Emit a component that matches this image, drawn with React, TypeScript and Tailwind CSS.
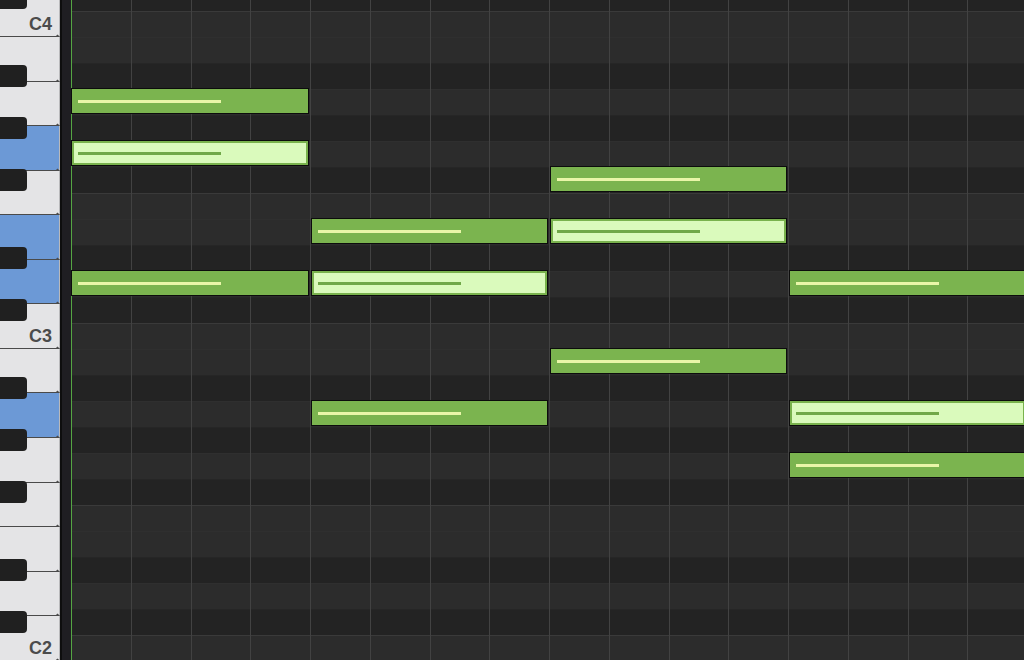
import clsx from "clsx";

// rows from C#4 (partly hidden at top) down to C2
const ROWS = Array.from({ length: 26 }, (_, k) => {
  const semis = 1 - k; // offset from C4
  const n = ((semis % 12) + 12) % 12;
  return { key: k, black: [1, 3, 6, 8, 10].includes(n), edge: n === 0 || n === 5 };
});

const WHITE_KEYS = [
  { name: "D4" },
  { name: "C4", label: true },
  { name: "B3" },
  { name: "A3" },
  { name: "G3", held: true },
  { name: "F3" },
  { name: "E3", held: true },
  { name: "D3", held: true },
  { name: "C3", label: true },
  { name: "B2" },
  { name: "A2", held: true },
  { name: "G2" },
  { name: "F2" },
  { name: "E2" },
  { name: "D2" },
  { name: "C2", label: true },
];

type NoteData = { pos: string; selected?: boolean };

const NOTES: NoteData[] = [
  { pos: "row-start-5 col-start-1" },
  { pos: "row-start-7 col-start-1", selected: true },
  { pos: "row-start-8 col-start-9 ml-[1px]" },
  { pos: "row-start-10 col-start-5 ml-[1px]" },
  { pos: "row-start-10 col-start-9 ml-[1px]", selected: true },
  { pos: "row-start-12 col-start-1" },
  { pos: "row-start-12 col-start-5 ml-[1px]", selected: true },
  { pos: "row-start-12 col-start-13 ml-[1px]" },
  { pos: "row-start-15 col-start-9 ml-[1px]" },
  { pos: "row-start-17 col-start-5 ml-[1px]" },
  { pos: "row-start-17 col-start-13 ml-[1px]", selected: true },
  { pos: "row-start-19 col-start-13 ml-[1px]" },
];

function Keyboard() {
  return (
    <div className="relative w-[60px] shrink-0 overflow-hidden bg-[#e4e4e6]">
      <div className="flex flex-col -mt-[52.143px]">
        {WHITE_KEYS.map((k) => (
          <div
            key={k.name}
            className={clsx(
              "relative flex h-[44.571px] shrink-0 items-end justify-end border-b border-[#4a4a4a] pr-[7px] pb-[3px] border-r border-r-[#b9b9bb]",
              k.held ? "bg-[#6c99d6]" : "bg-[#e4e4e6]"
            )}
          >
            {k.label && (
              <span className="text-[18px] font-bold leading-none text-[#4b4b4b]">{k.name}</span>
            )}
            <span className="absolute right-[0px] bottom-[-2px] h-[3px] w-[3px] rotate-45 bg-[#4a4a4a]" />
          </div>
        ))}
      </div>
      <div className="absolute inset-0 flex flex-col -mt-[15px]">
        {ROWS.map((r) => (
          <div key={r.key} className="h-[26px] shrink-0">
            {r.black && <div className="mt-[2px] h-[22px] w-[27px] rounded-r-[4px] bg-[#202020]" />}
          </div>
        ))}
      </div>
    </div>
  );
}

function Note({ pos, selected }: NoteData) {
  return (
    <div
      className={clsx(
        "col-span-4 flex items-center border border-[#0c0c0c] pl-[6px] mr-[1px]",
        pos,
        selected ? "bg-[#dafabc] shadow-[inset_0_0_0_2px_#79b24d]" : "bg-[#7bb44f]"
      )}
    >
      <div className={clsx("h-[3px] w-[143px]", selected ? "bg-[#70a848]" : "bg-[#e9f6a8]")} />
    </div>
  );
}

export default function App() {
  return (
    <div className="flex h-[660px] w-[1024px] overflow-hidden bg-[#262626] font-['Liberation_Sans',sans-serif]">
      <Keyboard />
      <div className="w-[11px] shrink-0 border-l-2 border-[#0e0e0e] bg-[#1f1e22]" />
      <div className="relative flex-1 overflow-hidden">
        <div className="flex flex-col -mt-[15px]">
          {ROWS.map((r) => (
            <div
              key={r.key}
              className={clsx(
                "h-[26px] shrink-0 border-t",
                r.black ? "bg-[#232323] border-[#262626]" : "bg-[#2c2c2c]",
                !r.black && (r.edge ? "border-[#3a3a3a]" : "border-[#2f2f2f]")
              )}
            />
          ))}
        </div>
        <div className="absolute inset-0 flex">
          {Array.from({ length: 16 }, (_, i) => (
            <div
              key={i}
              className={clsx(
                "w-[59.75px] shrink-0 border-l",
                i === 0 ? "border-[#55a543]" : "border-[#424242]"
              )}
            />
          ))}
        </div>
        <div className="absolute left-0 right-0 top-[-16px] grid grid-cols-[repeat(16,59.75px)] grid-rows-[repeat(26,26px)]">
          {NOTES.map((n, i) => (
            <Note key={i} {...n} />
          ))}
        </div>
      </div>
    </div>
  );
}
